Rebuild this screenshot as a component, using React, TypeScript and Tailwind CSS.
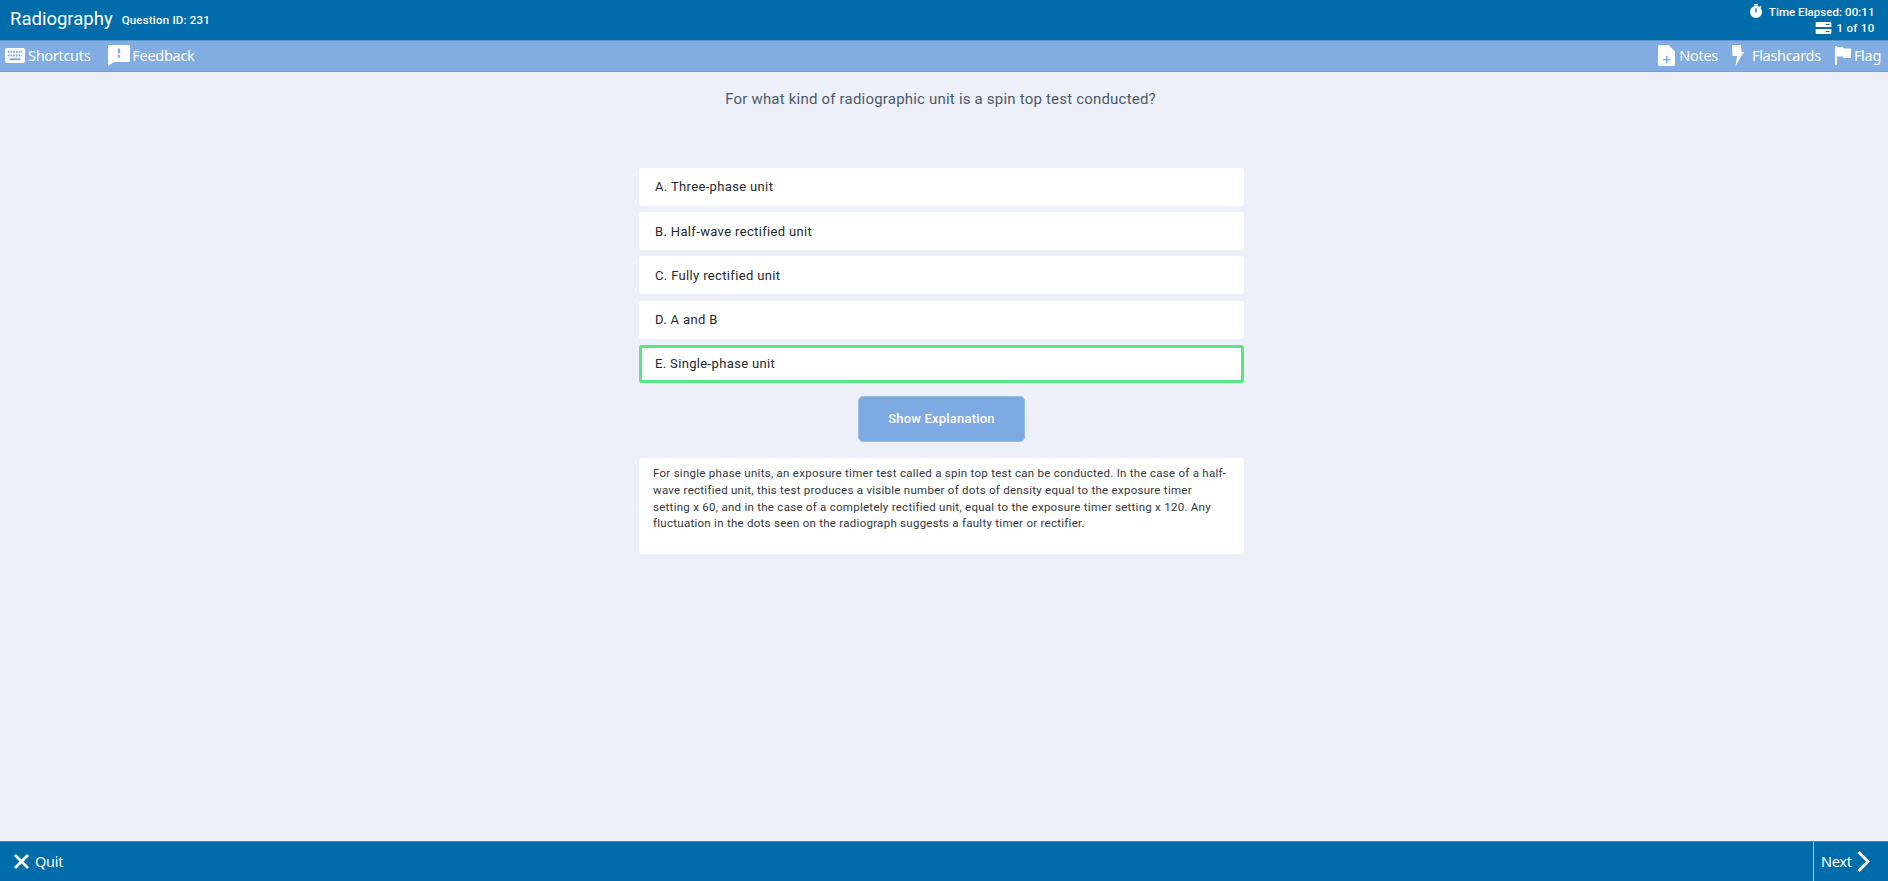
import type { ReactNode } from "react";

const options = [
  { label: "A. Three-phase unit" },
  { label: "B. Half-wave rectified unit" },
  { label: "C. Fully rectified unit" },
  { label: "D. A and B" },
  { label: "E. Single-phase unit", selected: true },
];

function KeyboardIcon() {
  return (
    <svg width="20" height="15" viewBox="0 0 22 16" fill="white" preserveAspectRatio="none">
      <path
        fillRule="evenodd"
        d="M2 0h18a2 2 0 0 1 2 2v12a2 2 0 0 1-2 2H2a2 2 0 0 1-2-2V2a2 2 0 0 1 2-2zM3 3v2h2V3zm3 0v2h2V3zm3 0v2h2V3zm3 0v2h2V3zm3 0v2h2V3zm3 0v2h1V3zM3 7v2h2V7zm3 0v2h2V7zm3 0v2h2V7zm3 0v2h2V7zm3 0v2h2V7zm3 0v2h1V7zM5 11v2h12v-2z"
      />
    </svg>
  );
}

function FeedbackIcon() {
  return (
    <svg width="22" height="21" viewBox="0 0 22 21" fill="white">
      <path
        fillRule="evenodd"
        d="M1.500 0h19A1.500 1.500 0 0 1 22 1.500v14a1.500 1.500 0 0 1-1.500 1.500H6l-6 4V1.500A1.500 1.500 0 0 1 1.500 0zM9.800 3.500v5h2.400v-5zm0 6.500v2.800h2.400V10z"
      />
    </svg>
  );
}

function NotesIcon() {
  return (
    <svg width="17" height="21" viewBox="0 0 17 21" fill="white">
      <path
        fillRule="evenodd"
        d="M2 0h8.500L17 6.500V19a2 2 0 0 1-2 2H2a2 2 0 0 1-2-2V2a2 2 0 0 1 2-2zm6 11v3H5v1.500h3v3h1.500v-3h3V14h-3v-3z"
      />
    </svg>
  );
}

function BoltIcon() {
  return (
    <svg width="12" height="21" viewBox="0 0 12 21" fill="white">
      <path d="M0 0h9l.5 7H12L3.500 21l1.500-10H0.500z" />
    </svg>
  );
}

function FlagIcon() {
  return (
    <svg width="16" height="19" viewBox="0 0 16 19" fill="white">
      <path d="M0 0h2v1h6l1 1.500h7V12H8.500l-1-1.500H2V19H0z" />
    </svg>
  );
}

function TimerIcon() {
  return (
    <svg width="14" height="14" viewBox="0 0 14 15" fill="white" className="mb-[2px]">
      <path
        fillRule="evenodd"
        d="M5 0h4v1.500H5zM11.500 2l1.500 1.400-1 1-1.500-1.400zM7 2a6.500 6.500 0 1 1 0 13A6.500 6.500 0 0 1 7 2zm-.7 2.500v4.500h1.400V4.500z"
      />
    </svg>
  );
}

function StackIcon() {
  return (
    <svg width="17" height="12" viewBox="0 0 17 13" fill="white">
      <path
        fillRule="evenodd"
        d="M1 0h15a1 1 0 0 1 1 1v4.500H0V1a1 1 0 0 1 1-1zM0 7.500h17V12a1 1 0 0 1-1 1H1a1 1 0 0 1-1-1zM11 2.200v1h4v-1zM11 9.700v1h4v-1z"
      />
    </svg>
  );
}

function ToolItem({ icon, label, gap }: { icon: ReactNode; label: string; gap: string }) {
  return (
    <div className={`flex items-center ${gap}`}>
      {icon}
      <span>{label}</span>
    </div>
  );
}

export default function App() {
  return (
    <div className="flex h-[881px] flex-col overflow-hidden bg-[#edf0f9] font-['Roboto',sans-serif]">
      {/* Header */}
      <header className="flex h-[39.5px] shrink-0 items-center justify-between bg-[#006daa] pl-[10px] pr-[13.5px] text-white">
        <div className="flex items-center gap-[9px]">
          <span className="text-[18.5px]">Radiography</span>
          <span className="pt-[2px] text-[11.5px] font-medium tracking-[0.2px]">Question ID: 231</span>
        </div>
        <div className="flex flex-col items-end text-[11.5px] font-medium leading-[16px] tracking-[0.05px]">
          <div className="flex items-center gap-[6px]">
            <TimerIcon />
            <span>Time Elapsed: 00:11</span>
          </div>
          <div className="flex items-center gap-[4px]">
            <StackIcon />
            <span className="tracking-[0.3px]">1 of 10</span>
          </div>
        </div>
      </header>

      {/* Toolbar */}
      <div className="flex h-[32px] shrink-0 items-center justify-between border-y border-t-[#5f97cf] border-b-[#6f9fd4] bg-[#81ade2] pl-[5px] pr-[7px] font-['Noto_Sans',sans-serif] text-[14.5px] tracking-[-0.3px] text-white">
        <div className="flex items-center gap-[18px]">
          <ToolItem icon={<KeyboardIcon />} label="Shortcuts" gap="gap-[3px]" />
          <ToolItem icon={<FeedbackIcon />} label="Feedback" gap="gap-[2px]" />
        </div>
        <div className="flex items-center gap-[14px]">
          <ToolItem icon={<NotesIcon />} label="Notes" gap="gap-[4px]" />
          <ToolItem icon={<BoltIcon />} label="Flashcards" gap="gap-[8px]" />
          <ToolItem icon={<FlagIcon />} label="Flag" gap="gap-[3px]" />
        </div>
      </div>

      {/* Question */}
      <main className="flex flex-1 flex-col items-center pr-[5px]">
        <p className="mr-[2px] mt-[16.5px] text-[15px] leading-[22px] tracking-[0.2px] text-[#4c5a68]">
          For what kind of radiographic unit is a spin top test conducted?
        </p>

        <div className="mt-[58.1px] flex w-[605px] flex-col gap-[6.2px]">
          {options.map((option) => (
            <div
              key={option.label}
              className={
                option.selected
                  ? "flex h-[38px] items-center rounded-[3px] border-[3px] border-[#56e684] bg-white pl-[13px] text-[13px] tracking-[0.35px] text-[#26292d]"
                  : "flex h-[38px] items-center rounded-[3px] bg-white pl-[16px] text-[13px] tracking-[0.35px] text-[#26292d]"
              }
            >
              {option.label}
            </div>
          ))}
        </div>

        <button className="mt-[12.7px] h-[46px] w-[167px] rounded-[5px] border border-[#9bbdea] bg-[#7daae3] text-[13px] font-medium tracking-[0.2px] text-white">
          Show Explanation
        </button>

        <div className="mt-[16.4px] h-[96.5px] w-[605px] rounded-[3px] bg-white pl-[14px] pr-[14px] pt-[7.5px] text-[11.5px] leading-[16.6px] tracking-[0.27px] text-[#34373b]">
          For single phase units, an exposure timer test called a spin top test can be conducted. In the case of a half-wave rectified unit, this test produces a visible number of dots of density equal to the exposure timer setting x 60, and in the case of a completely rectified unit, equal to the exposure timer setting x 120. Any fluctuation in the dots seen on the radiograph suggests a faulty timer or rectifier.
        </div>
      </main>

      {/* Footer */}
      <footer className="flex h-10 shrink-0 items-stretch justify-between border-t border-[#3d8cc0] bg-[#006daa] font-['Noto_Sans',sans-serif] text-[14.5px] tracking-[-0.3px] text-white">
        <div className="flex items-center gap-[6px] pl-[14px]">
          <svg width="15" height="15" viewBox="0 0 15 15" fill="none" stroke="white" strokeWidth="2.8">
            <path d="M1 1l13 13M14 1L1 14" />
          </svg>
          <span>Quit</span>
        </div>
        <div className="flex w-[75px] items-center gap-[5px] border-l border-[#a9cfe6] pl-[7px]">
          <span>Next</span>
          <svg width="13" height="21" viewBox="0 0 13 21" fill="none" stroke="white" strokeWidth="3">
            <path d="M1.500 1l9.500 9.500-9.500 9.500" />
          </svg>
        </div>
      </footer>
    </div>
  );
}
